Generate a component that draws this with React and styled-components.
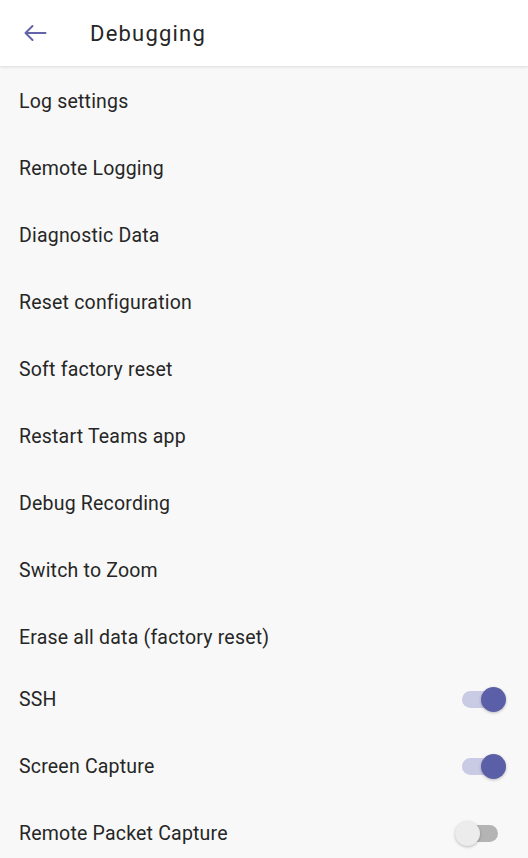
import React from "react";
import styled, { createGlobalStyle } from "styled-components";

const GlobalStyle = createGlobalStyle`
  html, body {
    margin: 0;
    padding: 0;
    background: #f8f8f8;
  }
  body {
    font-family: Roboto, "Noto Sans", sans-serif;
    color: #262626;
  }
`;

const Page = styled.div`
  width: 528px;
  height: 858px;
  overflow: hidden;
  background: #f8f8f8;
  display: flex;
  flex-direction: column;
`;

const Header = styled.header`
  height: 66px;
  flex-shrink: 0;
  background: #ffffff;
  display: flex;
  align-items: center;
  box-shadow: 0 1px 3px rgba(0, 0, 0, 0.12);
  position: relative;
  z-index: 1;
`;

const BackButton = styled.button`
  width: 70px;
  height: 66px;
  padding: 0 0 0 23px;
  border: 0;
  background: none;
  display: flex;
  align-items: center;
  cursor: pointer;
`;

const Title = styled.h1`
  margin: 0 0 0 20px;
  font-size: 22px;
  font-weight: 400;
  letter-spacing: 1.2px;
  color: #262626;
`;

const List = styled.div`
  padding-top: 2px;
  display: flex;
  flex-direction: column;
`;

const ToggleGroup = styled.div`
  margin-top: -5px;
  display: flex;
  flex-direction: column;
`;

const Row = styled.div`
  height: 67px;
  padding: 0 22px 0 19px;
  display: flex;
  align-items: center;
  justify-content: space-between;
`;

const Label = styled.span`
  font-size: 19.5px;
  letter-spacing: 0.2px;
  color: #262626;
`;

const Track = styled.div`
  position: relative;
  width: 36px;
  height: 17px;
  border-radius: 9px;
  background: ${(p) => (p.$on ? "#c9cae4" : "#b4b4b4")};
  margin-right: 8px;
`;

const Thumb = styled.div`
  position: absolute;
  top: -4px;
  left: ${(p) => (p.$on ? "19px" : "-7px")};
  width: 25px;
  height: 25px;
  border-radius: 50%;
  background: ${(p) => (p.$on ? "#5b5fa7" : "#ececec")};
  box-shadow: 0 1px 3px rgba(0, 0, 0, 0.25);
`;

const Switch = ({ on }) => (
  <Track $on={on}>
    <Thumb $on={on} />
  </Track>
);

const items = [
  "Log settings",
  "Remote Logging",
  "Diagnostic Data",
  "Reset configuration",
  "Soft factory reset",
  "Restart Teams app",
  "Debug Recording",
  "Switch to Zoom",
  "Erase all data (factory reset)",
];

const toggles = [
  { label: "SSH", on: true },
  { label: "Screen Capture", on: true },
  { label: "Remote Packet Capture", on: false },
];

export default function App() {
  return (
    <Page>
      <GlobalStyle />
      <Header>
        <BackButton aria-label="Back">
          <svg width="24" height="18" viewBox="0 0 24 18" fill="none">
            <path
              d="M22.5 9H2.5M9.5 2L2.5 9L9.5 16"
              stroke="#6264a7"
              strokeWidth="2"
              strokeLinecap="round"
              strokeLinejoin="round"
            />
          </svg>
        </BackButton>
        <Title>Debugging</Title>
      </Header>
      <List>
        {items.map((t) => (
          <Row key={t}>
            <Label>{t}</Label>
          </Row>
        ))}
        <ToggleGroup>
          {toggles.map((t) => (
            <Row key={t.label}>
              <Label>{t.label}</Label>
              <Switch on={t.on} />
            </Row>
          ))}
        </ToggleGroup>
      </List>
    </Page>
  );
}
